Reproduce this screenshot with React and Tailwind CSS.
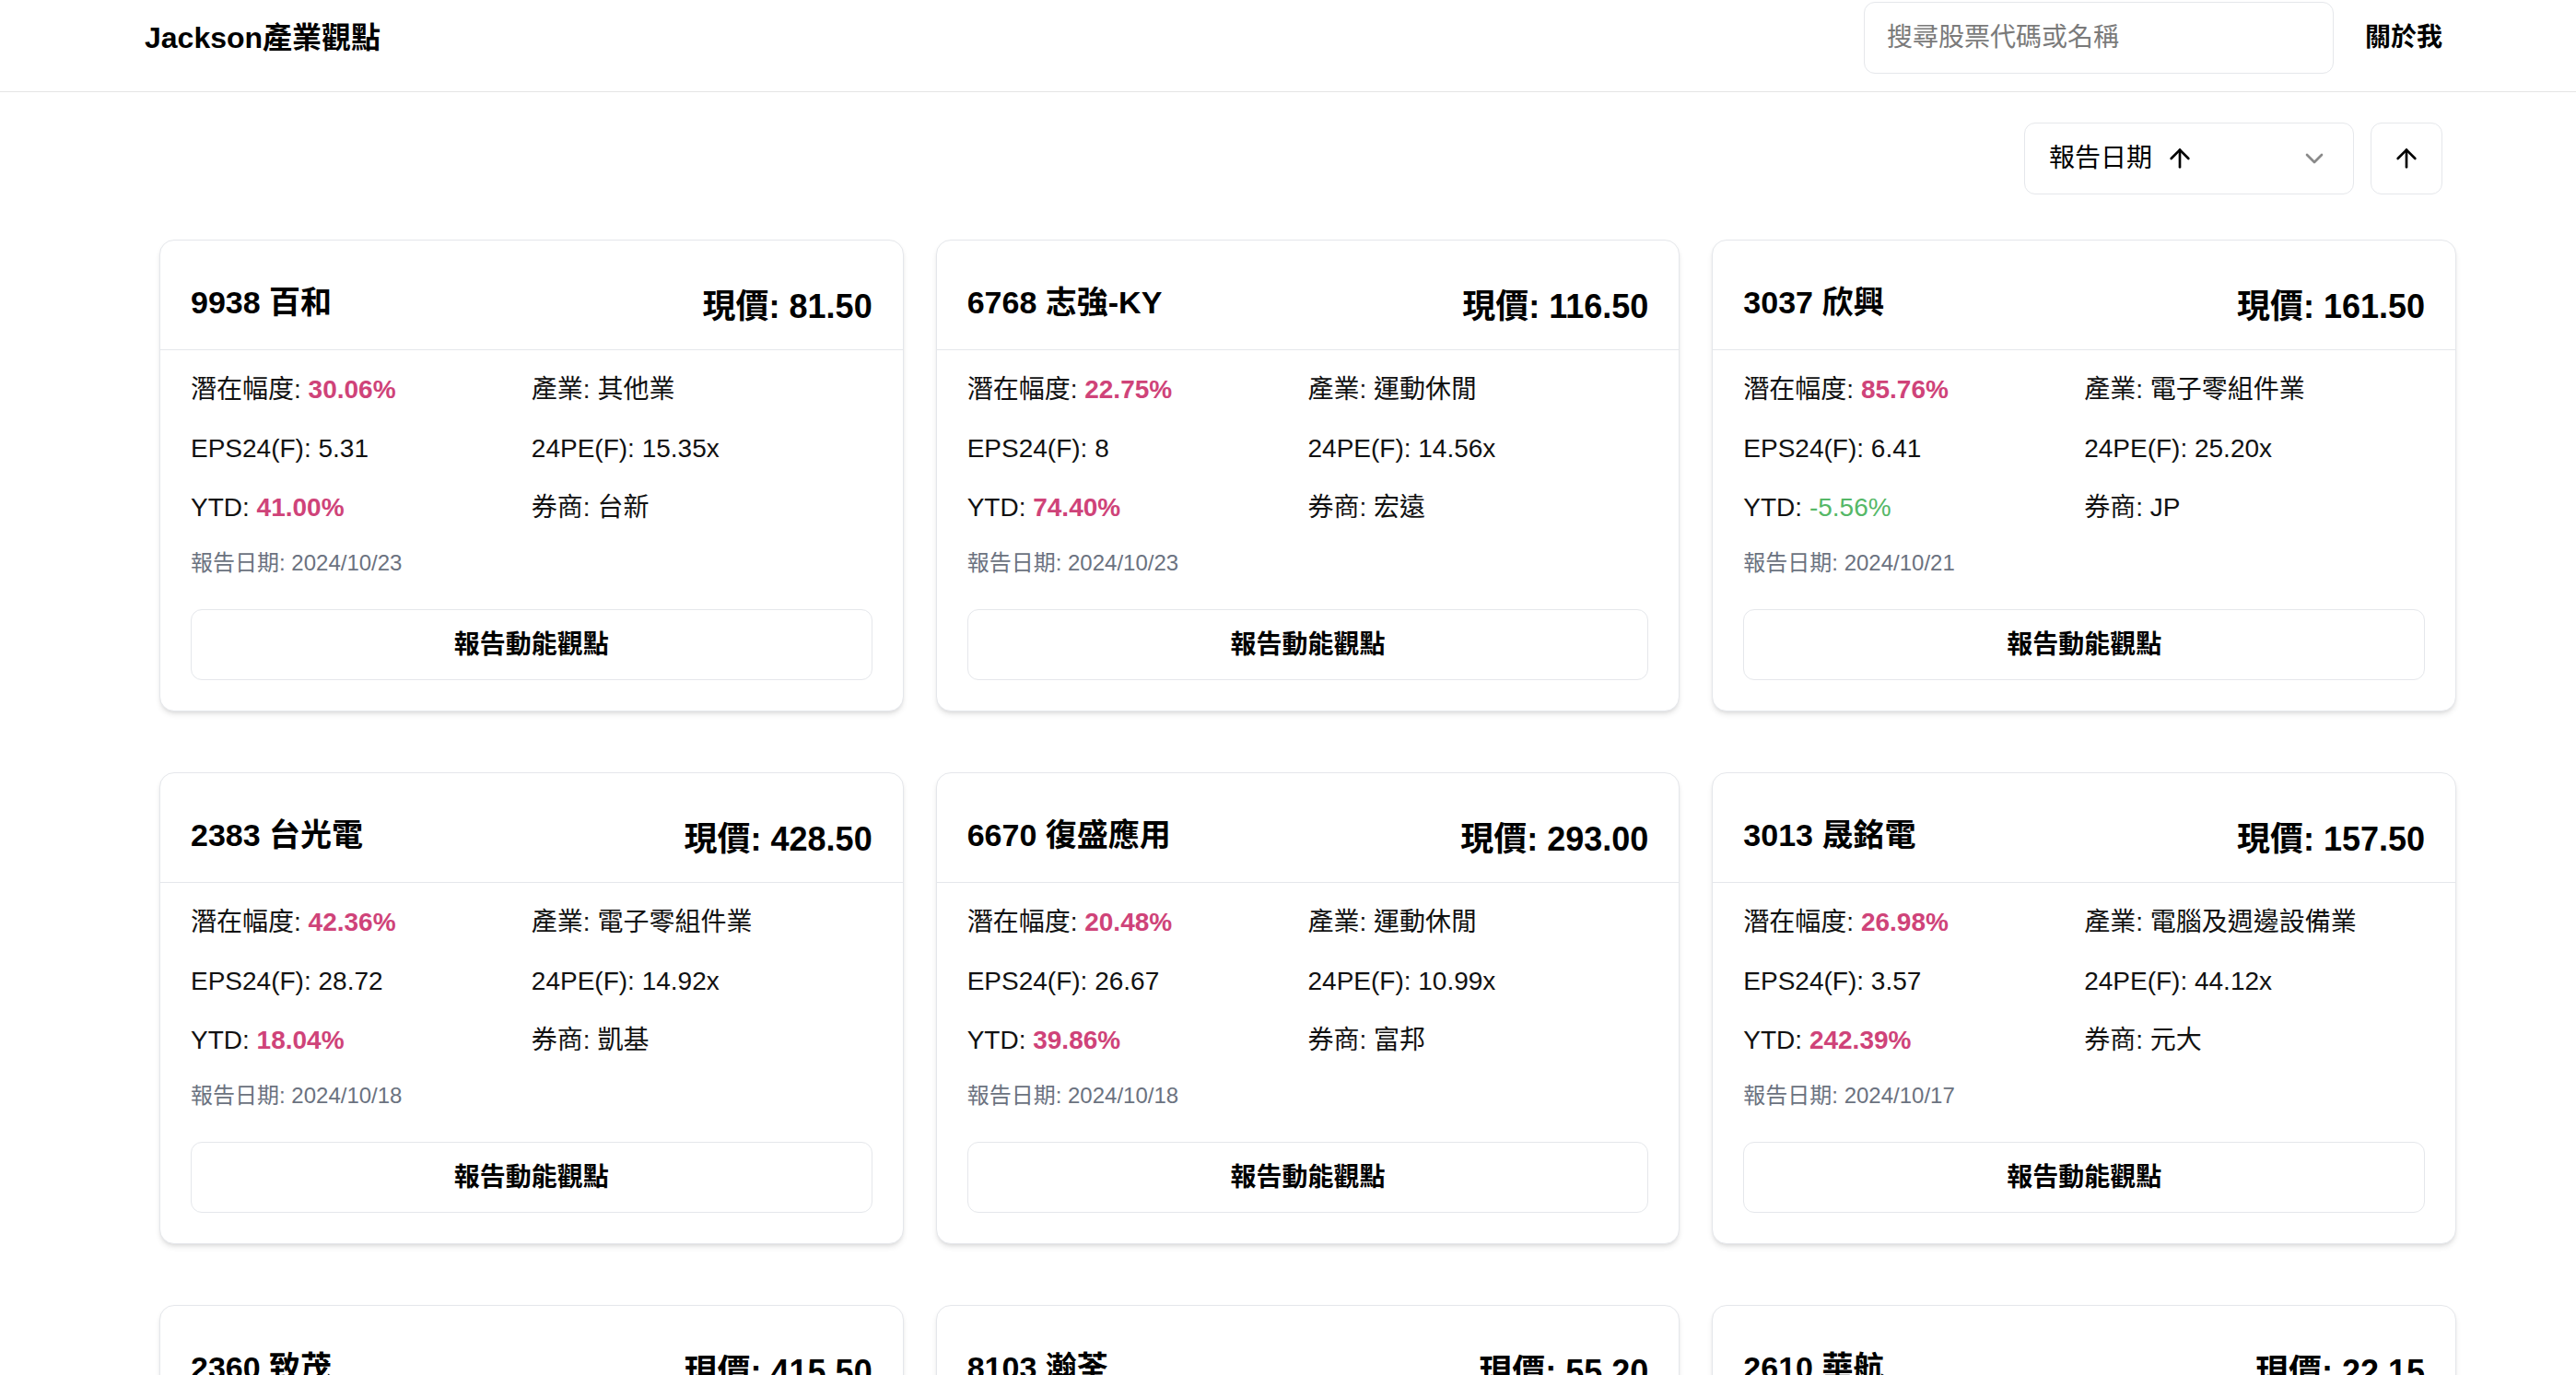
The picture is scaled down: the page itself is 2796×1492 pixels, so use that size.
import React from 'react';
import { ArrowUp, ChevronDown } from 'lucide-react';

const stocks = [
  { code: '9938', name: '百和', price: '81.50', upside: '30.06%', industry: '其他業', eps: '5.31', pe: '15.35x', ytd: '41.00%', broker: '台新', date: '2024/10/23' },
  { code: '6768', name: '志強-KY', price: '116.50', upside: '22.75%', industry: '運動休閒', eps: '8', pe: '14.56x', ytd: '74.40%', broker: '宏遠', date: '2024/10/23' },
  { code: '3037', name: '欣興', price: '161.50', upside: '85.76%', industry: '電子零組件業', eps: '6.41', pe: '25.20x', ytd: '-5.56%', broker: 'JP', date: '2024/10/21' },
  { code: '2383', name: '台光電', price: '428.50', upside: '42.36%', industry: '電子零組件業', eps: '28.72', pe: '14.92x', ytd: '18.04%', broker: '凱基', date: '2024/10/18' },
  { code: '6670', name: '復盛應用', price: '293.00', upside: '20.48%', industry: '運動休閒', eps: '26.67', pe: '10.99x', ytd: '39.86%', broker: '富邦', date: '2024/10/18' },
  { code: '3013', name: '晟銘電', price: '157.50', upside: '26.98%', industry: '電腦及週邊設備業', eps: '3.57', pe: '44.12x', ytd: '242.39%', broker: '元大', date: '2024/10/17' },
  { code: '2360', name: '致茂', price: '415.50', upside: '18.12%', industry: '電子零組件業', eps: '16.20', pe: '25.65x', ytd: '36.50%', broker: '國泰', date: '2024/10/16' },
  { code: '8103', name: '瀚荃', price: '55.20', upside: '24.64%', industry: '電子零組件業', eps: '3.10', pe: '17.81x', ytd: '12.30%', broker: '永豐', date: '2024/10/16' },
  { code: '2610', name: '華航', price: '22.15', upside: '17.38%', industry: '航運業', eps: '1.42', pe: '15.60x', ytd: '-3.91%', broker: '統一', date: '2024/10/15' },
];

function StockCard({ stock }) {
  const negative = stock.ytd.startsWith('-');

  return (
    <div className="bg-white border border-[#e5e7eb] rounded-[16px] shadow-md">
      <div className="h-[119px] px-[33px] pt-[47px] border-b border-[#e5e7eb] flex justify-between items-start">
        <h3 className="text-[34px] leading-[40px] font-bold text-black">
          {stock.code} {stock.name}
        </h3>
        <p className="text-[36px] leading-[40px] font-bold text-black mt-[5px]">現價: {stock.price}</p>
      </div>

      <div className="px-[33px] pt-[23px] pb-[33px]">
        <div className="grid grid-cols-2 gap-y-[24px] text-[28px] leading-[40px] text-[#111]">
          <p>
            潛在幅度: <span className="font-bold text-[#cf4379]">{stock.upside}</span>
          </p>
          <p>產業: {stock.industry}</p>
          <p>EPS24(F): {stock.eps}</p>
          <p>24PE(F): {stock.pe}</p>
          <p>
            YTD:{' '}
            {negative ? (
              <span className="text-[#55b867]">{stock.ytd}</span>
            ) : (
              <span className="font-bold text-[#cf4379]">{stock.ytd}</span>
            )}
          </p>
          <p>券商: {stock.broker}</p>
        </div>

        <p className="mt-[24px] text-[24px] leading-[32px] text-[#6b7280]">報告日期: {stock.date}</p>

        <button className="mt-[34px] w-full h-[77px] border border-[#e5e7eb] rounded-[12px] bg-white text-[28px] font-bold text-black">
          報告動能觀點
        </button>
      </div>
    </div>
  );
}

export default function App() {
  return (
    <div className="h-screen overflow-hidden bg-white font-['Liberation_Sans','Noto_Sans_CJK_TC',sans-serif]">
      {/* top bar */}
      <header className="h-[98px] border-b border-[#e5e5e5] pl-[157px] pr-[145px]">
        <div className="mt-[2px] h-[78px] flex items-center justify-between">
          <h1 className="text-[32px] font-bold text-black">Jackson產業觀點</h1>
          <div className="flex items-center gap-[34px]">
            <input
              type="text"
              placeholder="搜尋股票代碼或名稱"
              className="w-[510px] h-[78px] px-[24px] border border-[#e5e7eb] rounded-[12px] text-[28px] placeholder:text-[#7a7a7a] outline-none"
            />
            <a className="text-[28px] font-bold text-black">關於我</a>
          </div>
        </div>
      </header>

      <main className="pl-[173px] pr-[130px]">
        {/* sort controls */}
        <div className="mt-[33px] pr-[15px] flex justify-end gap-[18px]">
          <button className="w-[358px] h-[78px] pl-[26px] pr-[26px] border border-[#e5e7eb] rounded-[12px] flex items-center justify-between text-[28px] text-black">
            <span className="flex items-center gap-[14px]">
              報告日期
              <ArrowUp size={32} strokeWidth={2} />
            </span>
            <ChevronDown size={32} strokeWidth={2} className="text-[#8a8a8a]" />
          </button>
          <button className="w-[78px] h-[78px] border border-[#e5e7eb] rounded-[12px] flex items-center justify-center text-black">
            <ArrowUp size={32} strokeWidth={2} />
          </button>
        </div>

        {/* cards */}
        <div className="mt-[49px] grid grid-cols-3 gap-x-[35px] gap-y-[66px]">
          {stocks.map((stock) => (
            <StockCard key={stock.code} stock={stock} />
          ))}
        </div>
      </main>
    </div>
  );
}
